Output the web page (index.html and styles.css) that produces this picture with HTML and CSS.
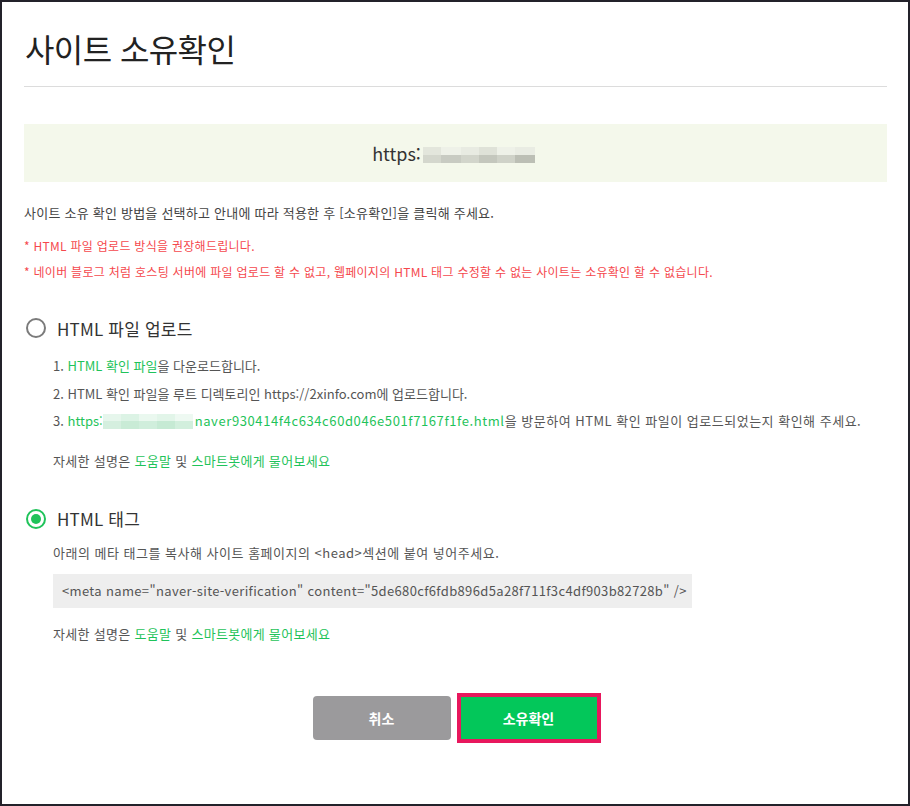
FILE: index.html
```html
<!DOCTYPE html>
<html lang="ko">
<head>
<meta charset="utf-8">
<title>사이트 소유확인</title>
<link rel="stylesheet" href="styles.css">
</head>
<body>
<div class="page">
  <h1 class="title">사이트 소유확인</h1>
  <div class="site-box">https:<span class="blur blur-gray"><i></i><i></i><i></i><i></i><i></i><i></i></span></div>
  <p class="instr">사이트 소유 확인 방법을 선택하고 안내에 따라 적용한 후 [소유확인]을 클릭해 주세요.</p>
  <p class="warn">* HTML 파일 업로드 방식을 권장해드립니다.</p>
  <p class="warn">* 네이버 블로그 처럼 호스팅 서버에 파일 업로드 할 수 없고, 웹페이지의 HTML 태그 수정할 수 없는 사이트는 소유확인 할 수 없습니다.</p>

  <div class="option option-first">
    <span class="radio"></span>
    <span class="opt-label">HTML 파일 업로드</span>
  </div>
  <ol class="steps">
    <li>1. <span class="g">HTML 확인 파일</span>을 다운로드합니다.</li>
    <li>2. HTML 확인 파일을 루트 디렉토리인 https://2xinfo.com에 업로드합니다.</li>
    <li>3. <span class="g">https:<span class="blur blur-green"><i></i><i></i><i></i><i></i><i></i></span><span class="fname">naver930414f4c634c60d046e501f7167f1fe.html</span></span><span class="wide">을 방문하여 HTML 확인 파일이 업로드되었는지 확인해 주세요.</span></li>
  </ol>
  <p class="help help-first">자세한 설명은 <span class="g">도움말</span> 및 <span class="g">스마트봇에게 물어보세요</span></p>

  <div class="option option-second">
    <span class="radio radio-on"></span>
    <span class="opt-label">HTML 태그</span>
  </div>
  <p class="desc">아래의 메타 태그를 복사해 사이트 홈페이지의 &lt;head&gt;섹션에 붙여 넣어주세요.</p>
  <div class="code">&lt;meta name="naver-site-verification" content="5de680cf6fdb896d5a28f711f3c4df903b82728b" /&gt;</div>
  <p class="help help-second">자세한 설명은 <span class="g">도움말</span> 및 <span class="g">스마트봇에게 물어보세요</span></p>

  <div class="buttons">
    <button class="btn btn-cancel">취소</button>
    <button class="btn btn-ok">소유확인</button>
  </div>
</div>
</body>
</html>
```
FILE: styles.css
```css
html, body {
  margin: 0;
  padding: 0;
  background: #fff;
}
body {
  font-family: "Noto Sans CJK KR", "Noto Sans", sans-serif;
  color: #555;
}
.page {
  width: 910px;
  height: 806px;
  box-sizing: border-box;
  border: 2px solid #23222a;
  padding: 0 21px 0 22px;
}
.title {
  margin: 0;
  padding: 26px 0 18px 1px;
  line-height: 40px;
  font-size: 32px;
  font-weight: 400;
  letter-spacing: -0.6px;
  color: #222;
  border-bottom: 1px solid #dcdcdc;
}
.site-box {
  margin-top: 37px;
  height: 58px;
  line-height: 58px;
  background: #f4f8eb;
  text-align: center;
  font-size: 18px;
  color: #333;
  padding-right: 4px;
}
.blur {
  display: inline-flex;
  vertical-align: middle;
  height: 16px;
}
.blur i {
  display: block;
  height: 100%;
}
.blur-gray {
  width: 112px;
  margin-left: 2px;
  margin-top: -3px;
}
.blur-gray i:nth-child(1) { width: 18px; background: linear-gradient(#e3e6dc 50%, #d4d7cd 50%); }
.blur-gray i:nth-child(2) { width: 20px; background: linear-gradient(#eef1e8 50%, #c8cbc2 50%); }
.blur-gray i:nth-child(3) { width: 18px; background: linear-gradient(#e8ebe2 50%, #d2d5cb 50%); }
.blur-gray i:nth-child(4) { width: 18px; background: linear-gradient(#dfe2d8 50%, #c4c7bd 50%); }
.blur-gray i:nth-child(5) { width: 18px; background: linear-gradient(#eef1e8 50%, #cfd2c8 50%); }
.blur-gray i:nth-child(6) { width: 20px; background: linear-gradient(#e9ece3 50%, #bcbfb5 50%); }
.blur-green {
  width: 90px;
  height: 15px;
  margin: -2px 2px 0 0;
}
.blur-green i:nth-child(1) { width: 18px; background: linear-gradient(#e6f6ec 50%, #d5efdf 50%); }
.blur-green i:nth-child(2) { width: 18px; background: linear-gradient(#dcf3e5 50%, #c9ebd6 50%); }
.blur-green i:nth-child(3) { width: 18px; background: linear-gradient(#eaf8ef 50%, #d0eedc 50%); }
.blur-green i:nth-child(4) { width: 18px; background: linear-gradient(#e2f5e9 50%, #c6ead4 50%); }
.blur-green i:nth-child(5) { width: 18px; background: linear-gradient(#eef9f2 50%, #d2efdd 50%); }
.instr {
  margin: 21px 0 0;
  line-height: 20px;
  font-size: 13px;
  letter-spacing: 0.23px;
  color: #444;
}
.warn {
  margin: 0;
  line-height: 26px;
  font-size: 12px;
  letter-spacing: 0.28px;
  color: #f5484d;
}
.instr + .warn {
  margin-top: 10px;
}
.option {
  display: flex;
  align-items: center;
  height: 24px;
  padding-left: 2px;
}
.option-first { margin-top: 31px; }
.option-second { margin-top: 36px; }
.radio {
  box-sizing: border-box;
  width: 20px;
  height: 20px;
  border: 2px solid #7b7b7b;
  border-radius: 50%;
  display: flex;
  align-items: center;
  justify-content: center;
}
.radio-on {
  border-color: #1fc35a;
}
.radio-on::after {
  content: "";
  width: 10px;
  height: 10px;
  border-radius: 50%;
  background: #1fc35a;
}
.opt-label {
  margin-left: 11px;
  font-size: 17px;
  color: #333;
  letter-spacing: 0.2px;
}
.steps {
  list-style: none;
  margin: 12px 0 0;
  padding: 0 0 0 29px;
}
.steps li {
  line-height: 27.5px;
  font-size: 13px;
  letter-spacing: 0;
  color: #555;
}
.fname {
  letter-spacing: 0.6px;
}
.wide {
  letter-spacing: 0.5px;
}
.g {
  color: #1fc35a;
}
.help {
  margin: 0;
  padding-left: 29px;
  line-height: 20px;
  font-size: 13px;
  letter-spacing: 0.3px;
  color: #555;
}
.help-first { margin-top: 16px; }
.help-second { margin-top: 16px; }
.desc {
  margin: 12px 0 0;
  padding-left: 29px;
  line-height: 20px;
  font-size: 13px;
  letter-spacing: 0.5px;
  color: #555;
}
.code {
  margin: 11px 0 0 29px;
  width: 639px;
  box-sizing: border-box;
  height: 34px;
  line-height: 34px;
  padding-left: 9px;
  background: #eeeeee;
  font-size: 13px;
  letter-spacing: 0.35px;
  color: #555;
  white-space: nowrap;
}
.buttons {
  margin-top: 52px;
  display: flex;
  justify-content: center;
  align-items: center;
  gap: 10px;
  padding-right: 2px;
}
.btn {
  border: 0;
  margin: 0;
  font-family: "Noto Sans CJK KR", "Noto Sans", sans-serif;
  font-size: 14px;
  font-weight: 700;
  color: #fff;
  cursor: pointer;
}
.btn-cancel {
  width: 138px;
  height: 44px;
  border-radius: 4px;
  background: #9b9a9c;
}
.btn-ok {
  width: 136px;
  height: 42px;
  background: #03c75a;
  outline: 4px solid #e8175d;
}
```
